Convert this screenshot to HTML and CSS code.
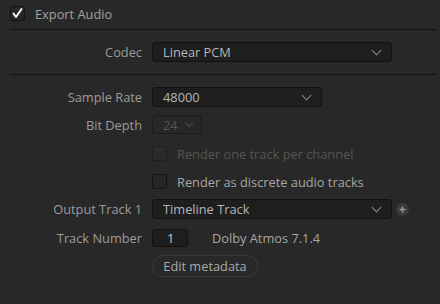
FILE: index.html
```html
<!DOCTYPE html>
<html>
<head>
<meta charset="utf-8">
<link rel="stylesheet" href="styles.css">
</head>
<body>
<div class="panel">
  <div class="header">
    <span class="check checked">
      <svg width="15" height="15" viewBox="0 0 15 15"><polyline points="3.5,7.5 6,11 11.5,3" fill="none" stroke="#f2f2f2" stroke-width="2" stroke-linecap="round" stroke-linejoin="round"/></svg>
    </span>
    <span class="header-label">Export Audio</span>
  </div>
  <div class="sep sep1"></div>
  <div class="row r-codec">
    <div class="label">Codec</div>
    <div class="select w-long"><span class="val">Linear PCM</span><span class="chev"></span></div>
  </div>
  <div class="sep sep2"></div>
  <div class="row r-rate">
    <div class="label">Sample Rate</div>
    <div class="select w-mid"><span class="val">48000</span><span class="chev"></span></div>
  </div>
  <div class="row r-depth">
    <div class="label">Bit Depth</div>
    <div class="select w-small disabled"><span class="val">24</span><span class="chev"></span></div>
  </div>
  <div class="row r-one">
    <div class="label"></div>
    <span class="check disabled"></span>
    <span class="opt disabled-text">Render one track per channel</span>
  </div>
  <div class="row r-disc">
    <div class="label"></div>
    <span class="check"></span>
    <span class="opt">Render as discrete audio tracks</span>
  </div>
  <div class="row r-out">
    <div class="label">Output Track 1</div>
    <div class="select w-long"><span class="val">Timeline Track</span><span class="chev"></span></div>
    <span class="plus">
      <svg width="13" height="13" viewBox="0 0 13 13"><circle cx="6.5" cy="6.5" r="6.5" fill="#3a3a3a"/><path d="M6.5 3.5v6M3.5 6.5h6" stroke="#9a9a9a" stroke-width="1.6"/></svg>
    </span>
  </div>
  <div class="row r-num">
    <div class="label">Track Number</div>
    <div class="numbox">1</div>
    <span class="dolby">Dolby Atmos 7.1.4</span>
  </div>
  <div class="row r-btn">
    <div class="label"></div>
    <div class="btn">Edit metadata</div>
  </div>
</div>
</body>
</html>
```
FILE: styles.css
```css
html, body {
  margin: 0;
  padding: 0;
  background: #282828;
}
body {
  font-family: "Open Sans", "Noto Sans", sans-serif;
  font-size: 12.8px;
  color: #9c9c9c;
  width: 440px;
  height: 304px;
  overflow: hidden;
}
.panel {
  padding: 6px 4px 0 10px;
}
.header {
  display: flex;
  align-items: center;
  height: 15px;
}
.header-label {
  margin-left: 10px;
  color: #a2a2a2;
}
.check {
  box-sizing: border-box;
  width: 15px;
  height: 15px;
  border: 1px solid #121212;
  border-radius: 3px;
  background: #262626;
  display: flex;
  align-items: center;
  justify-content: center;
  flex: none;
}
.check svg { display: block; margin: -1px; }
.check.disabled {
  border-color: #1e1e1e;
  background: #2a2a2a;
}
.sep {
  height: 1px;
  background: #131313;
}
.sep1 { margin-top: 8px; }
.sep2 { margin-top: 12px; }
.row {
  display: flex;
  align-items: center;
}
.label {
  width: 132px;
  flex: none;
  text-align: right;
  margin-right: 10px;
  color: #9c9c9c;
  white-space: nowrap;
}
.select {
  box-sizing: border-box;
  height: 20px;
  background: #1e1e1e;
  border: 1px solid #111;
  border-radius: 3px;
  display: flex;
  align-items: center;
  justify-content: space-between;
  padding: 0 11px 0 10px;
  color: #b6b6b6;
}
.w-long { width: 240px; }
.w-mid { width: 170px; }
.w-small { width: 50px; height: 19px; padding: 0 9px 0 10px; }
.select.disabled {
  background: #272727;
  border-color: #1c1c1c;
  color: #555;
}
.chev {
  width: 6px;
  height: 6px;
  border-right: 1.6px solid #8a8a8a;
  border-bottom: 1.6px solid #8a8a8a;
  transform: translateY(-2px) rotate(45deg);
}
.select.disabled .chev {
  border-color: #4c4c4c;
  width: 5px;
  height: 5px;
}
.r-codec { margin-top: 12px; height: 20px; }
.r-rate { margin-top: 12px; height: 20px; }
.r-depth { margin-top: 8px; height: 19px; }
.r-one { margin-top: 12px; height: 15px; }
.r-disc { margin-top: 13px; height: 15px; }
.r-out { margin-top: 10px; height: 20px; }
.r-num { margin-top: 10px; height: 18px; }
.r-btn { margin-top: 8px; height: 22px; }
.opt {
  margin-left: 10px;
  color: #a6a6a6;
  white-space: nowrap;
}
.disabled-text { color: #555; }
.plus {
  margin-left: 4px;
  display: flex;
}
.numbox {
  box-sizing: border-box;
  width: 36px;
  height: 18px;
  background: #1e1e1e;
  border: 1px solid #111;
  border-radius: 3px;
  padding-left: 14px;
  line-height: 16px;
  color: #c4c4c4;
}
.dolby {
  margin-left: 24px;
  color: #a6a6a6;
}
.btn {
  box-sizing: border-box;
  height: 22px;
  width: 106px;
  border: 1px solid #3a3a3a;
  border-radius: 11px;
  display: flex;
  align-items: center;
  justify-content: center;
  color: #aaaaaa;
}
```
